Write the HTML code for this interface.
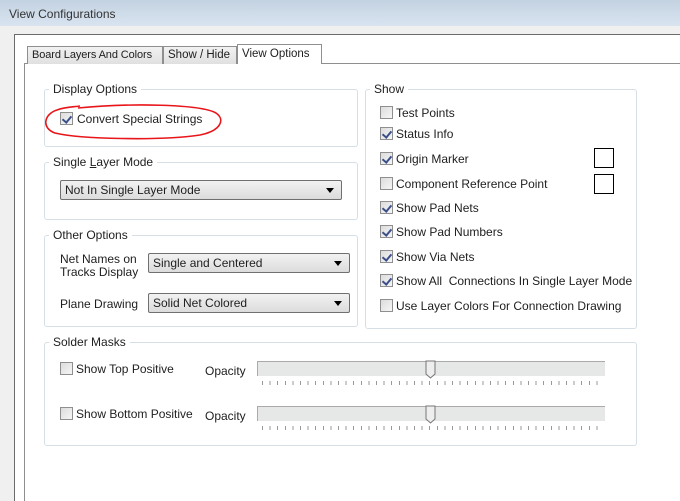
<!DOCTYPE html>
<html><head><meta charset="utf-8"><style>
*{box-sizing:border-box;margin:0;padding:0}
body{width:680px;height:501px;overflow:hidden;background:#fff;font-family:"Liberation Sans",sans-serif;font-size:11.5px;color:#1e1e1e;position:relative}
.a{position:absolute}
.title{left:0;top:0;width:680px;height:26px;background:linear-gradient(#c3d2e1,#d9e4f0)}
.title span{position:absolute;left:9px;top:7px;font-size:12px;color:#333}
.strip{left:0;top:26px;width:680px;height:8px;background:#f0f0f0}
.side{left:0;top:26px;width:14px;height:475px;background:#f0f0f0}
.win{left:14px;top:34px;width:666px;height:467px;border-left:1px solid #6b6b6b;border-top:1px solid #6b6b6b;background:#fff}
.panel{left:24px;top:63px;width:656px;height:438px;border-left:1px solid #8e8f8f;border-top:1px solid #8e8f8f}
.tab{top:46px;height:18px;border:1px solid #8e8f8f;border-bottom:none;background:linear-gradient(#f2f2f2,#e0e0e0);padding:2px 4px;font-size:11.5px;white-space:nowrap;overflow:hidden}
.tab.act{top:44px;height:20px;background:#fff;padding-top:3px}
.grp{border:1px solid #d5dfe5;border-radius:3px}
.lbl{background:#fff;padding:0 4px;font-size:12px;top:-8px;left:4px;position:absolute;white-space:nowrap}
.cb{width:13px;height:13px;border:1px solid #8f8f8f;background:linear-gradient(135deg,#dcdcdc,#f6f6f6)}
.cb.c::after{content:"";position:absolute;left:3px;top:1px;width:4px;height:7px;border:solid #3b4f8a;border-width:0 2px 2px 0;transform:rotate(40deg)}
.t{white-space:nowrap;font-size:12px}
.combo{height:20px;border:1px solid #707070;border-radius:2px;background:linear-gradient(#f2f2f2,#dcdcdc);padding:2px 4px;font-size:12px}
.combo::after{content:"";position:absolute;right:7px;top:7px;border:4px solid transparent;border-top:5px solid #000;border-bottom:none}
.track{height:15px;background:#e6e8e8;border-top:1px solid #aaa;border-left:1px solid #aaa}
.ticks{height:4px;background:repeating-linear-gradient(90deg,#999 0 1px,transparent 1px 7.6px)}
.sw{width:20px;height:20px;border:1px solid #000}
</style></head><body>
<div class="a title"><span>View Configurations</span></div>
<div class="a strip"></div><div class="a side"></div>
<div class="a win"></div>
<div class="a panel"></div>
<div class="a tab" style="left:27px;width:136px;font-size:11px;letter-spacing:-0.1px">Board Layers And Colors</div>
<div class="a tab" style="left:163px;width:74px">Show / Hide</div>
<div class="a tab act" style="left:237px;width:85px">View Options</div>

<div class="a grp" style="left:44px;top:89px;width:314px;height:58px"><span class="lbl">Display Options</span></div>
<div class="a cb c" style="left:60px;top:112px"></div><div class="a t" style="left:77px;top:112px">Convert Special Strings</div>
<svg class="a" style="left:0;top:0" width="680" height="501"><path d="M78 108 C130 103,200 104,216 113 C226 120,220 131,200 135 C160 141,80 139,55 133 C41 128,44 114,57 110 C65 107,74 107,80 106" fill="none" stroke="#e8161b" stroke-width="1.6"/></svg>

<div class="a grp" style="left:44px;top:162px;width:314px;height:58px"><span class="lbl">Single <u>L</u>ayer Mode</span></div>
<div class="a combo" style="left:60px;top:180px;width:282px">Not In Single Layer Mode</div>

<div class="a grp" style="left:44px;top:235px;width:314px;height:92px"><span class="lbl">Other Options</span></div>
<div class="a t" style="left:60px;top:253px;line-height:13px">Net Names on<br>Tracks Display</div>
<div class="a combo" style="left:148px;top:253px;width:202px">Single and Centered</div>
<div class="a t" style="left:60px;top:297px">Plane Drawing</div>
<div class="a combo" style="left:148px;top:293px;width:202px">Solid Net Colored</div>

<div class="a grp" style="left:365px;top:89px;width:272px;height:240px"><span class="lbl">Show</span></div>
<div class="a cb" style="left:380px;top:106px"></div><div class="a t" style="left:396px;top:106px">Test Points</div>
<div class="a cb c" style="left:380px;top:127px"></div><div class="a t" style="left:396px;top:127px">Status Info</div>
<div class="a cb c" style="left:380px;top:152px"></div><div class="a t" style="left:396px;top:152px">Origin Marker</div>
<div class="a sw" style="left:594px;top:148px"></div>
<div class="a cb" style="left:380px;top:177px"></div><div class="a t" style="left:396px;top:177px">Component Reference Point</div>
<div class="a sw" style="left:594px;top:174px"></div>
<div class="a cb c" style="left:380px;top:201px"></div><div class="a t" style="left:396px;top:201px">Show Pad Nets</div>
<div class="a cb c" style="left:380px;top:225px"></div><div class="a t" style="left:396px;top:225px">Show Pad Numbers</div>
<div class="a cb c" style="left:380px;top:250px"></div><div class="a t" style="left:396px;top:250px">Show Via Nets</div>
<div class="a cb c" style="left:380px;top:274px"></div><div class="a t" style="left:396px;top:274px">Show All &nbsp;Connections In Single Layer Mode</div>
<div class="a cb" style="left:380px;top:299px"></div><div class="a t" style="left:396px;top:299px">Use Layer Colors For Connection Drawing</div>

<div class="a grp" style="left:44px;top:342px;width:593px;height:104px"><span class="lbl">Solder Masks</span></div>
<div class="a cb" style="left:60px;top:362px"></div><div class="a t" style="left:76px;top:362px">Show Top Positive</div>
<div class="a t" style="left:205px;top:364px">Opacity</div>
<div class="a track" style="left:257px;top:361px;width:348px"></div>
<div class="a ticks" style="left:262px;top:381px;width:342px"></div>
<div class="a cb" style="left:60px;top:407px"></div><div class="a t" style="left:76px;top:407px">Show Bottom Positive</div>
<div class="a t" style="left:205px;top:409px">Opacity</div>
<div class="a track" style="left:257px;top:406px;width:348px"></div>
<div class="a ticks" style="left:262px;top:426px;width:342px"></div>
<svg class="a" style="left:425px;top:360px" width="12" height="20"><path d="M1 1H10V14L5.5 18L1 14Z" fill="#eee" stroke="#777"/></svg>
<svg class="a" style="left:425px;top:405px" width="12" height="20"><path d="M1 1H10V14L5.5 18L1 14Z" fill="#eee" stroke="#777"/></svg>
</body></html>
